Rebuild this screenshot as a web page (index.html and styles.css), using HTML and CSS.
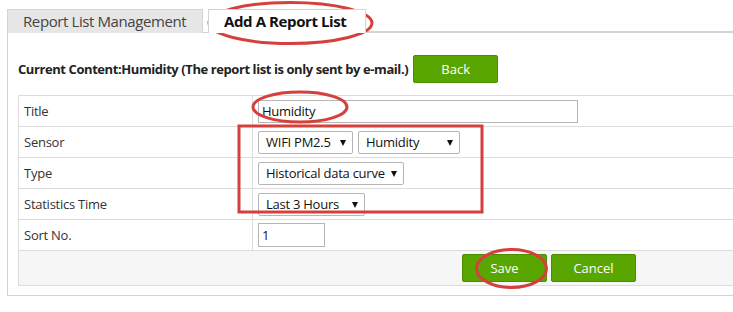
FILE: index.html
```html
<!DOCTYPE html>
<html>
<head>
<meta charset="utf-8">
<link rel="stylesheet" href="styles.css">
</head>
<body>
<div class="page">
  <div class="tabs">
    <div class="tab">Report List Management</div>
    <div class="tab active">Add A Report List</div>
    <div class="tab-fill"></div>
  </div>
  <div class="panel">
    <div class="header">
      <span class="current">Current Content:Humidity (The report list is only sent by e-mail.)</span>
      <button class="btn btn-back">Back</button>
    </div>
    <table class="form">
      <tr>
        <td class="label">Title</td>
        <td class="field"><input class="text title-input" value="Humidity"></td>
      </tr>
      <tr>
        <td class="label">Sensor</td>
        <td class="field">
          <div class="selects">
            <span class="sel w-wifi">WIFI PM2.5<i class="arrow"></i></span>
            <span class="sel w-hum">Humidity<i class="arrow"></i></span>
          </div>
        </td>
      </tr>
      <tr>
        <td class="label">Type</td>
        <td class="field"><div class="selects"><span class="sel w-type">Historical data curve<i class="arrow"></i></span></div></td>
      </tr>
      <tr>
        <td class="label">Statistics Time</td>
        <td class="field"><div class="selects"><span class="sel w-time">Last 3 Hours<i class="arrow"></i></span></div></td>
      </tr>
      <tr>
        <td class="label">Sort No.</td>
        <td class="field"><input class="text sort-input" value="1"></td>
      </tr>
      <tr class="actions">
        <td colspan="2">
          <div class="action-btns">
            <button class="btn btn-act">Save</button>
            <button class="btn btn-act">Cancel</button>
          </div>
        </td>
      </tr>
    </table>
  </div>
</div>
<svg class="marks" width="733" height="312" viewBox="0 0 733 312">
  <ellipse cx="290.5" cy="23" rx="81.5" ry="20.5"/>
  <ellipse cx="300" cy="107" rx="47" ry="15"/>
  <rect x="239" y="126" width="243" height="86"/>
  <ellipse cx="511.5" cy="268.5" rx="35" ry="19"/>
</svg>
</body>
</html>
```

FILE: styles.css
```css
html, body {
  margin: 0;
  padding: 0;
  background: #fff;
  overflow: hidden;
}
body {
  width: 733px;
  height: 312px;
  position: relative;
  font-family: "Open Sans", "Noto Sans", "DejaVu Sans", sans-serif;
  color: #333;
}
.page {
  padding-top: 9px;
  padding-left: 7px;
  width: 1200px;
}
.tabs {
  display: flex;
  height: 23px;
}
.tab {
  box-sizing: border-box;
  height: 24px;
  padding: 0 0 0 15px;
  font-size: 15px;
  line-height: 22px;
  letter-spacing: -0.4px;
  white-space: nowrap;
  color: #444;
  background: #e6e6e6;
  border: 1px solid #d4d4d4;
  border-bottom: none;
  width: 196px;
}
.tab.active {
  margin-left: 5px;
  width: 158px;
  background: #fff;
  color: #111;
  font-weight: bold;
  position: relative;
  z-index: 1;
}
.tab-fill {
  flex: 1;
  border-bottom: 1px solid #d4d4d4;
}
.panel {
  border-left: 1px solid #d4d4d4;
  border-top: 1px solid #d4d4d4;
  border-bottom: 1px solid #d4d4d4;
  height: 264px;
  box-sizing: border-box;
  padding-left: 10px;
  padding-top: 22px;
}
.header {
  display: flex;
  align-items: center;
  gap: 5px;
  height: 28px;
}
.current {
  font-size: 13px;
  font-weight: bold;
  letter-spacing: -0.42px;
  color: #222;
  white-space: nowrap;
}
.btn {
  font-family: inherit;
  color: #fff;
  background: #5aa600;
  border: 1px solid #4b8c00;
  border-radius: 2px;
  height: 28px;
  width: 85px;
  font-size: 13px;
  padding: 0;
}
.form {
  margin-top: 12px;
  border-collapse: collapse;
  width: 1062px;
  font-size: 13px;
  letter-spacing: -0.25px;
}
.form td {
  border: 1px solid #dcdcdc;
  height: 31px;
  box-sizing: border-box;
  padding: 0;
  vertical-align: middle;
}
.form td.label {
  width: 234px;
  padding-left: 5px;
  color: #333;
}
.form td.field {
  padding-left: 5px;
}
.text {
  box-sizing: border-box;
  border: 1px solid #b5b5b5;
  font-family: inherit;
  font-size: 13px;
  letter-spacing: -0.25px;
  color: #111;
  padding: 0 3px;
  margin: 0;
  display: block;
}
.title-input {
  width: 320px;
  height: 23px;
}
.sort-input {
  width: 67px;
  height: 24px;
}
.selects {
  display: flex;
  gap: 5px;
}
.sel {
  box-sizing: border-box;
  height: 23px;
  border: 1px solid #b5b5b5;
  border-radius: 2px;
  padding-left: 7px;
  line-height: 21px;
  font-size: 13px;
  color: #111;
  position: relative;
  background: #fff;
  white-space: nowrap;
}
.arrow {
  position: absolute;
  right: 6px;
  top: 8px;
  width: 0;
  height: 0;
  border-left: 3.5px solid transparent;
  border-right: 3.5px solid transparent;
  border-top: 6px solid #111;
}
.w-wifi { width: 95px; }
.w-hum { width: 102px; }
.w-type { width: 146px; }
.w-time { width: 107px; }
.actions td {
  background: #f6f6f6;
  height: 35px;
}
.action-btns {
  display: flex;
  justify-content: center;
  gap: 4px;
}
.btn-act {
  font-size: 13px;
  letter-spacing: 0;
}
.marks {
  position: absolute;
  left: 0;
  top: 0;
  pointer-events: none;
}
.marks ellipse, .marks rect {
  fill: none;
  stroke: #d6403c;
  stroke-width: 3;
}
```
